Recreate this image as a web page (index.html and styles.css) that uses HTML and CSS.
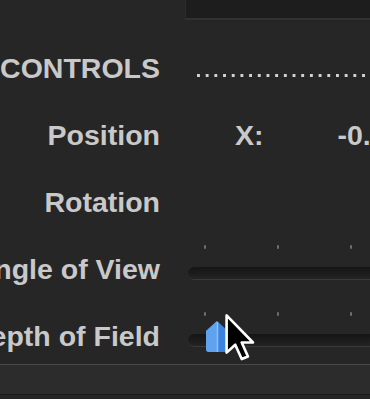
FILE: index.html
```html
<!DOCTYPE html>
<html lang="en">
<head>
    <meta charset="UTF-8">
    <title>Inspector</title>
    <link rel="stylesheet" href="styles.css">
</head>
<body>

    <!-- panel above -->
    <div class="top-strip">
        <div class="top-panel"></div>
    </div>

    <div class="inspector">
        <div class="row">
            <div class="label">CONTROLS</div>
            <div class="value"><div class="dots"></div></div>
        </div>

        <div class="row">
            <div class="label">Position</div>
            <div class="value coords">
                <span class="axis">X:</span>
                <span class="num">-0.</span>
            </div>
        </div>

        <div class="row">
            <div class="label">Rotation</div>
            <div class="value"></div>
        </div>

        <div class="row">
            <div class="label">Angle of View</div>
            <div class="value">
                <div class="slider">
                    <div class="ticks"><i></i><i></i><i></i></div>
                    <div class="track"></div>
                </div>
            </div>
        </div>

        <div class="row">
            <div class="label">Depth of Field</div>
            <div class="value">
                <div class="slider">
                    <div class="ticks"><i></i><i></i><i></i></div>
                    <div class="track"></div>
                    <svg class="thumb" width="24" height="33" viewBox="0 0 24 33">
                        <path d="M12 1 L23 11 L23 29 Q23 32 20 32 L4 32 Q1 32 1 29 L1 11 Z" fill="#3d82dc"/>
                        <path d="M12 1 L1 11 L1 29 Q1 32 4 32 L12 32 Z" fill="#5ea2f0"/>
                        <path d="M12.5 2 L12.5 32" stroke="#8cc0ff" stroke-width="1.5"/>
                    </svg>
                    <svg class="cursor" width="34" height="48" viewBox="0 0 14 20">
                        <polygon points="1,1 1,16.5 4.6,13.2 7.3,19.2 9.9,18.1 7.3,12.3 12,12.3" fill="#000" stroke="#fff" stroke-width="1.1" stroke-linejoin="round"/>
                    </svg>
                </div>
            </div>
        </div>
    </div>

    <div class="footer"></div>

</body>
</html>
```

FILE: styles.css
```css
body {
    margin: 0;
    width: 370px;
    height: 399px;
    overflow: hidden;
    background-color: #262626;
    color: #c9c9c9;
    font-family: "Liberation Sans", Arial, sans-serif;
    font-weight: bold;
    font-size: 28.5px;
}

.top-strip {
    display: flex;
    justify-content: flex-end;
}

.top-panel {
    width: 184px;
    height: 18px;
    background-color: #1d1d1d;
    border-bottom: 2px solid #313131;
    border-left: 1px solid #2b2b2b;
}

.inspector {
    display: flex;
    flex-direction: column;
    gap: 39px;
    margin-top: 34px;
}

.row {
    display: flex;
    height: 28px;
    line-height: 28px;
}

.label {
    flex: none;
    width: 160px;
    min-width: 0;
    display: flex;
    justify-content: flex-end;
    white-space: nowrap;
}

.value {
    flex: 1;
    min-width: 0;
    margin-left: 27px;
    display: flex;
    white-space: nowrap;
}

.dots {
    flex: 1;
    height: 3px;
    margin-top: 20px;
    margin-left: 10px;
    background-image: linear-gradient(to right, #d2d2d2 3px, transparent 3px);
    background-size: 8.7px 3px;
}

.coords {
    gap: 74px;
}

.axis {
    margin-left: 48px;
}

.slider {
    position: relative;
    flex: 1;
    margin-top: -10px;
    display: flex;
    flex-direction: column;
    gap: 18px;
}

.ticks {
    display: flex;
    gap: 71px;
    padding-left: 17px;
    height: 4px;
}

.ticks i {
    flex: none;
    width: 2px;
    height: 4px;
    background-color: #6e6e6e;
    border-radius: 1px;
}

.track {
    height: 12px;
    margin-left: 1px;
    border-radius: 7px 0 0 7px;
    background: linear-gradient(#151515, #1d1d1d 60%, #242424);
    border-bottom: 1px solid #3a3a3a;
}

.thumb {
    position: absolute;
    left: 18px;
    top: 8px;
}

.cursor {
    position: absolute;
    left: 37px;
    top: 1px;
}

.footer {
    margin-top: 14px;
    height: 29px;
    background-color: #2c2c2c;
    border-top: 1px solid #4a4a4a;
    border-bottom: 1px solid #1a1a1a;
}
```
